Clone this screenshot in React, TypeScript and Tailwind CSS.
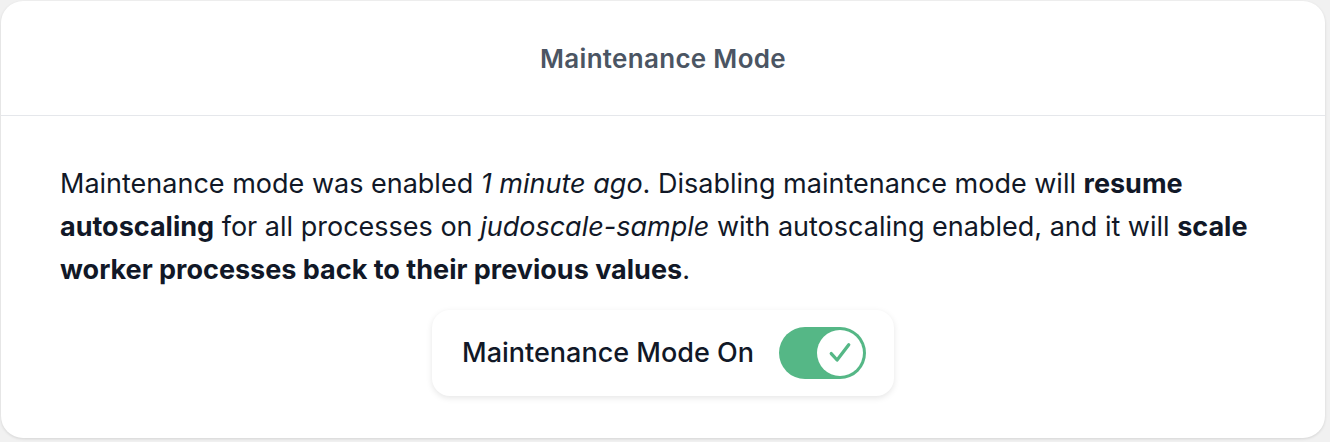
import React from 'react';

const Toggle: React.FC = () => (
  <div className="flex h-[52px] w-[87px] items-center justify-end rounded-full bg-[#55b786] p-[3px]">
    <div className="flex h-[46px] w-[46px] items-center justify-center rounded-full bg-white">
      <svg width="28" height="28" viewBox="0 0 24 24" fill="none" stroke="#55b786" strokeWidth="2.8" strokeLinecap="round" strokeLinejoin="round">
        <path d="M4.5 12.5l5 5.5L19.5 5" />
      </svg>
    </div>
  </div>
);

export default function App() {
  return (
    <div className="h-[442px] w-[1330px] bg-[#f1f1f1] pb-[4px] pl-[1px] pr-[5px] pt-[1px] font-['Inter',sans-serif]">
      <div className="flex h-full flex-col rounded-[22px] bg-white shadow-[0_1px_3px_rgba(0,0,0,0.12)]">
        <div className="flex h-[115px] items-center justify-center border-b border-[#e5e7eb]">
          <h2 className="text-[26px] font-semibold tracking-[0.3px] text-[#4b5563]">Maintenance Mode</h2>
        </div>
        <div className="flex flex-col items-center px-[59px] pt-[46px]">
          <p className="text-[27px] leading-[43px] text-[#111827]">
            Maintenance mode was enabled <em>1 minute ago</em>. Disabling maintenance mode will{' '}
            <strong className="font-bold">resume autoscaling</strong> for all processes on{' '}
            <em>judoscale-sample</em> with autoscaling enabled, and it will{' '}
            <strong className="font-bold">scale worker processes back to their previous values</strong>.
          </p>
          <div className="mt-[19px] flex h-[86px] items-center gap-[25px] rounded-[18px] bg-white pl-[30px] pr-[28px] shadow-[0_2px_6px_rgba(0,0,0,0.1)]">
            <span className="text-[27px] font-medium text-[#111827]">Maintenance Mode On</span>
            <Toggle />
          </div>
        </div>
      </div>
    </div>
  );
}
